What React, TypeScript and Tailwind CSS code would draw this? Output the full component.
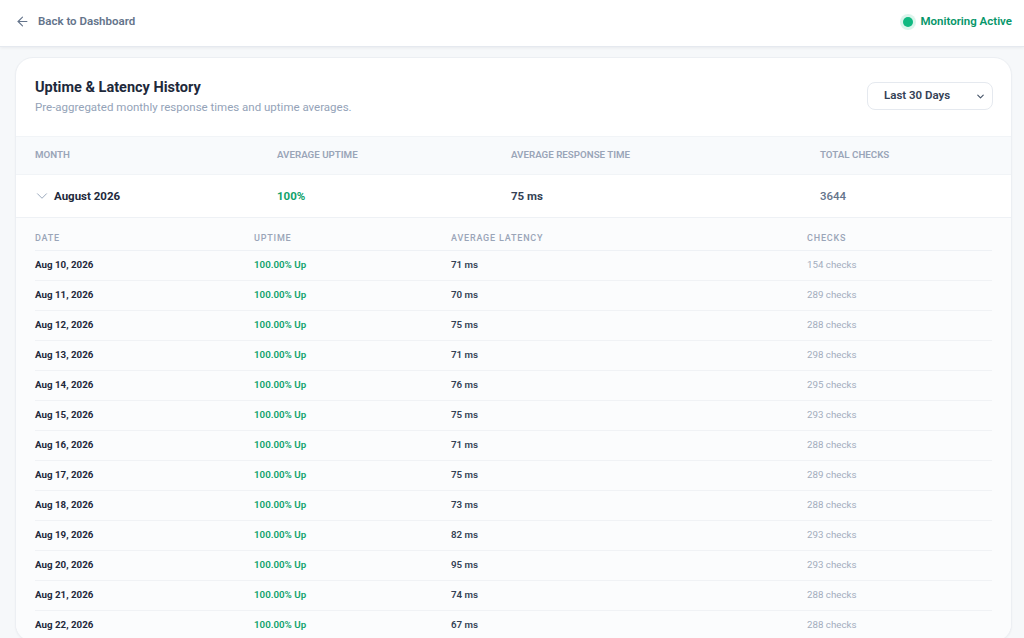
import { ArrowLeft, ChevronDown } from 'lucide-react';

const days = [
  { date: 'Aug 10, 2026', latency: 71, checks: 154 },
  { date: 'Aug 11, 2026', latency: 70, checks: 289 },
  { date: 'Aug 12, 2026', latency: 75, checks: 288 },
  { date: 'Aug 13, 2026', latency: 71, checks: 298 },
  { date: 'Aug 14, 2026', latency: 76, checks: 295 },
  { date: 'Aug 15, 2026', latency: 75, checks: 293 },
  { date: 'Aug 16, 2026', latency: 71, checks: 288 },
  { date: 'Aug 17, 2026', latency: 75, checks: 289 },
  { date: 'Aug 18, 2026', latency: 73, checks: 288 },
  { date: 'Aug 19, 2026', latency: 82, checks: 293 },
  { date: 'Aug 20, 2026', latency: 95, checks: 293 },
  { date: 'Aug 21, 2026', latency: 74, checks: 288 },
  { date: 'Aug 22, 2026', latency: 67, checks: 288 },
];

export default function App() {
  return (
    <div className="min-h-screen bg-[#f6f8fa] font-['Roboto',sans-serif]">
      {/* Top bar */}
      <header className="h-[47px] pb-[3px] bg-white border-b border-[#e5e9ef] shadow-[0_1px_3px_rgba(15,23,42,0.06)] flex items-center justify-between pl-[15px] pr-[12px]">
        <a className="flex items-center gap-[8px] text-[11.5px] font-semibold text-[#64748b]">
          <ArrowLeft className="w-[15px] h-[15px]" strokeWidth={1.75} />
          Back to Dashboard
        </a>
        <div className="flex items-center gap-[7px]">
          <span className="w-[10px] h-[10px] rounded-full bg-[#10b981] shadow-[0_0_0_3px_rgba(16,185,129,0.15)]" />
          <span className="text-[11.5px] font-semibold text-[#059669]">Monitoring Active</span>
        </div>
      </header>

      <div className="pt-[10px] pl-[15px] pr-[12px]">
        <div className="bg-white rounded-[18px] border border-[#eceff3] shadow-[0_1px_2px_rgba(15,23,42,0.04)] overflow-hidden">
          {/* Card header */}
          <div className="flex items-start justify-between pl-[19px] pr-[18px] pt-[21px] pb-[20px]">
            <div>
              <h1 className="text-[14.5px] font-bold text-[#1e293b] leading-[18px]">Uptime &amp; Latency History</h1>
              <p className="text-[11.5px] text-[#94a3b8] mt-[2px]">Pre-aggregated monthly response times and uptime averages.</p>
            </div>
            <button className="mt-[3px] w-[126px] h-[28px] rounded-lg border border-[#e5e9ef] bg-white flex items-center justify-between pl-[16px] pr-[6px] text-[11.5px] font-semibold text-[#334155]">
              Last 30 Days
              <ChevronDown className="w-[11px] h-[11px] text-[#475569]" strokeWidth={2.5} />
            </button>
          </div>

          {/* Monthly table head */}
          <div className="flex items-center h-[39px] bg-[#f8fafc] border-y border-[#f1f4f7] px-[19px] text-[9.75px] font-semibold uppercase text-[#9aa5b8]">
            <div className="w-[242px]">Month</div>
            <div className="w-[234px]">Average Uptime</div>
            <div className="w-[309px]">Average Response Time</div>
            <div>Total Checks</div>
          </div>

          {/* Month row */}
          <div className="flex items-center h-[43px] px-[19px] border-b border-[#eef1f5] bg-white">
            <div className="w-[242px] flex items-center gap-[3px] text-[11.5px] font-bold text-[#1e293b]">
              <ChevronDown className="w-[18px] h-[18px] -ml-[2px] text-[#94a3b8]" strokeWidth={1.25} />
              August 2026
            </div>
            <div className="w-[234px] text-[11.5px] font-bold text-[#10a26b]">100%</div>
            <div className="w-[309px] text-[11.5px] font-bold text-[#334155]">75 ms</div>
            <div className="text-[11.5px] font-medium text-[#64748b]">3644</div>
          </div>

          {/* Daily breakdown */}
          <div className="bg-[#fbfcfd] px-[19px] pt-[8px]">
            <div className="flex items-center h-[25px] border-b border-[#eef1f5] text-[9px] font-medium uppercase tracking-[0.09em] text-[#9aa5b8]">
              <div className="w-[219px]">Date</div>
              <div className="w-[197px]">Uptime</div>
              <div className="w-[356px]">Average Latency</div>
              <div>Checks</div>
            </div>
            {days.map((d) => (
              <div key={d.date} className="flex items-center h-[30px] border-b border-[#f0f2f5] text-[9.75px]">
                <div className="w-[219px] font-bold text-[#1e293b]">{d.date}</div>
                <div className="w-[197px] font-semibold text-[#10a26b]">100.00% Up</div>
                <div className="w-[356px] font-semibold text-[#334155]">{d.latency} ms</div>
                <div className="text-[#a3adbd]">{d.checks} checks</div>
              </div>
            ))}
          </div>
        </div>
      </div>
    </div>
  );
}
